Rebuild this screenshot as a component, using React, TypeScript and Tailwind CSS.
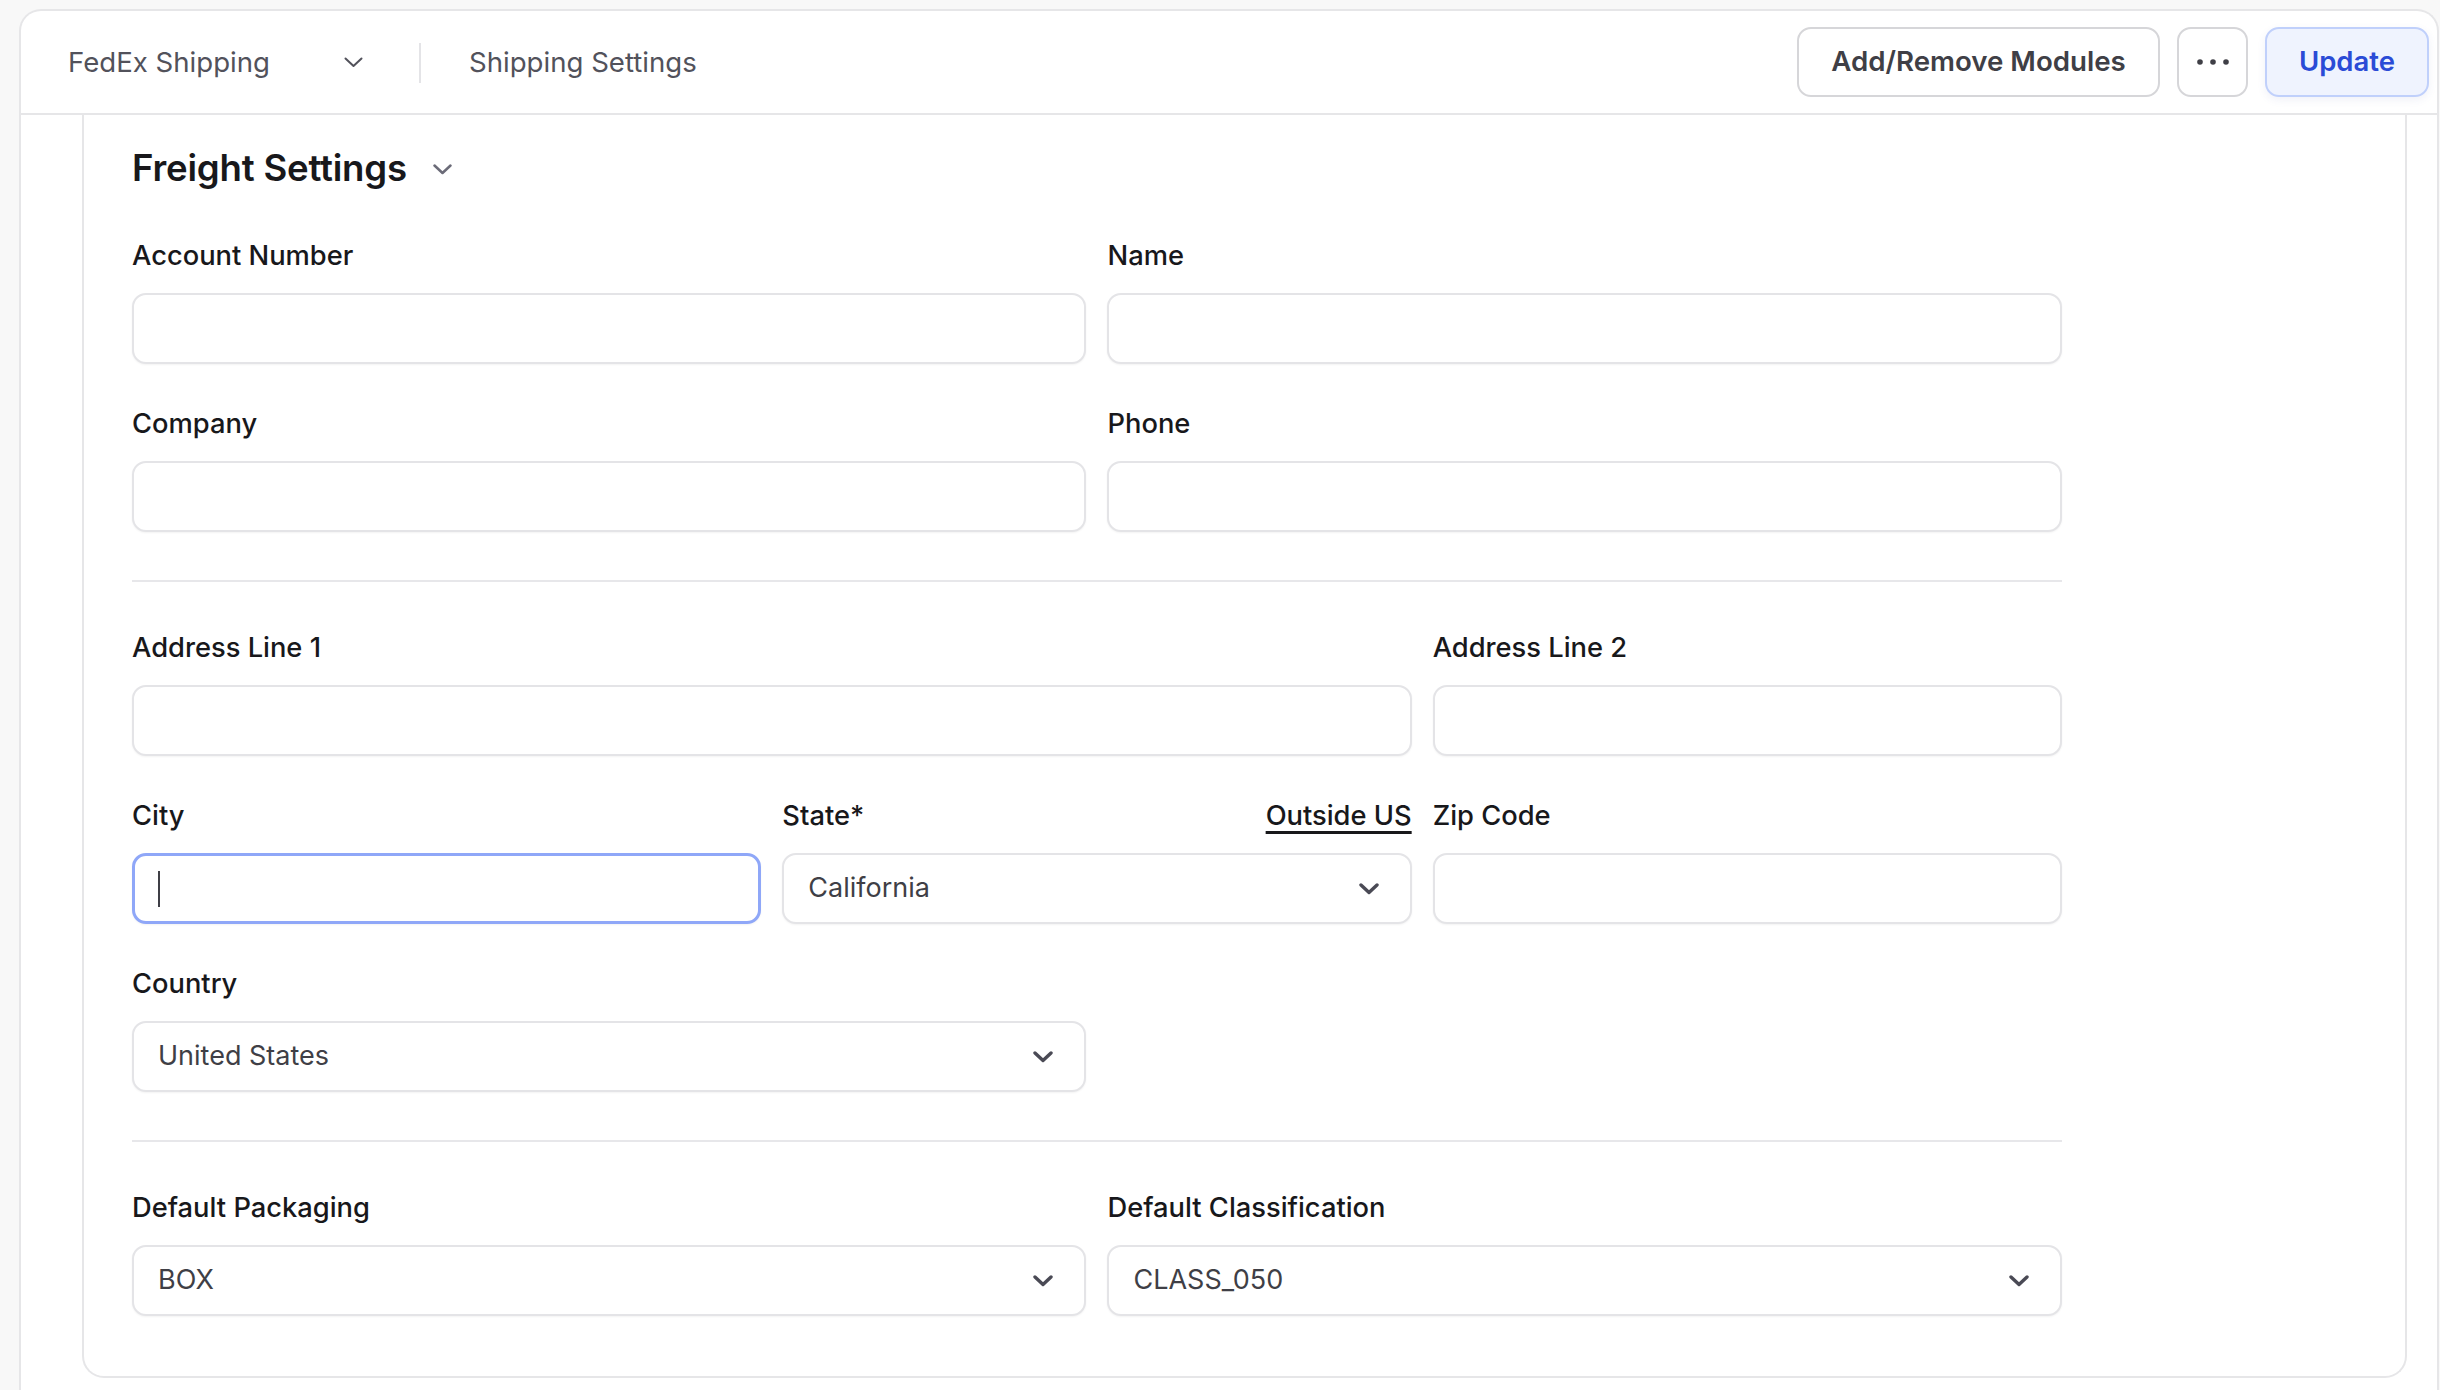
import React from "react";

const font = { fontFamily: "Inter, 'Noto Sans', sans-serif" };

function ChevronThin({ className = "", strokeWidth = 2 }: { className?: string; strokeWidth?: number }) {
  return (
    <svg className={className} width="19" height="11" viewBox="0 0 19 11" fill="none">
      <path d="M1.5 1.5 L9.5 9 L17.5 1.5" stroke="currentColor" strokeWidth={strokeWidth} strokeLinecap="round" strokeLinejoin="round" />
    </svg>
  );
}

function ChevronBold({ className = "" }: { className?: string }) {
  return (
    <svg className={className} width="20" height="12" viewBox="0 0 20 12" fill="none">
      <path d="M2 2 L10 9.5 L18 2" stroke="currentColor" strokeWidth="3.4" strokeLinecap="round" strokeLinejoin="round" />
    </svg>
  );
}

function Dots() {
  return (
    <svg width="32" height="8" viewBox="0 0 32 8" fill="#3f3f46">
      <circle cx="3" cy="4" r="2.8" />
      <circle cx="16" cy="4" r="2.8" />
      <circle cx="29" cy="4" r="2.8" />
    </svg>
  );
}

function Label({ children, extra }: { children: React.ReactNode; extra?: React.ReactNode }) {
  return (
    <div className="mb-[21px] flex h-[32px] items-center justify-between text-[27.3px] font-medium leading-[32px] text-[#18181b]">
      <span>{children}</span>
      {extra}
    </div>
  );
}

function TextInput() {
  return <div className="h-[71px] rounded-[14px] border-2 border-[#e4e4e7] bg-white shadow-[0_1px_2px_rgba(0,0,0,0.05)]" />;
}

function FocusedInput() {
  return (
    <div className="flex h-[71px] items-center rounded-[14px] border-[3px] border-[#8fa7f8] bg-white pl-[23px] shadow-[0_1px_2px_rgba(0,0,0,0.05)]">
      <span className="block h-[36px] w-[2px] bg-[#3f3f46]" />
    </div>
  );
}

function SelectBox({ value }: { value: string }) {
  return (
    <div className="flex h-[71px] items-center justify-between rounded-[14px] border-2 border-[#e4e4e7] bg-white pl-[24px] pr-[31px] text-[27px] text-[#3f3f46] shadow-[0_1px_2px_rgba(0,0,0,0.05)]">
      <span>{value}</span>
      <ChevronBold className="text-[#4a4a55]" />
    </div>
  );
}

function Field({
  label,
  span,
  children,
  extra,
}: {
  label: string;
  span: string;
  children: React.ReactNode;
  extra?: React.ReactNode;
}) {
  return (
    <div className={span}>
      <Label extra={extra}>{label}</Label>
      {children}
    </div>
  );
}

function Divider() {
  return <div className="col-span-6 mb-[6px] mt-[4px] h-[2px] bg-[#e7e7ea]" />;
}

export default function App() {
  return (
    <div style={font} className="h-[1390px] w-[2440px] overflow-hidden bg-[#f8f8f8] pl-[19px] pr-[1px] pt-[9px]">
      <div className="h-full rounded-t-[22px] border-x-2 border-t-2 border-[#e6e6e8] bg-white">
        {/* top bar */}
        <div className="flex h-[104px] items-center justify-between border-b-2 border-[#e6e6e8] pl-[47px] pr-[8px]">
          <div className="flex items-center pt-[2px] text-[27.6px] text-[#52525b]">
            <div className="flex w-[295px] items-center justify-between">
              <span>FedEx Shipping</span>
              <ChevronThin className="text-[#52525b]" />
            </div>
            <div className="ml-[56px] mr-[48px] h-[40px] w-[2px] bg-[#e4e4e7]" />
            <span>Shipping Settings</span>
          </div>
          <div className="flex items-center gap-[17px]">
            <button className="flex h-[70px] w-[363px] items-center justify-center rounded-[14px] border-2 border-[#d6d6d9] bg-white text-[27.7px] font-semibold text-[#3f3f46]">
              Add/Remove Modules
            </button>
            <button className="flex h-[70px] w-[71px] items-center justify-center rounded-[14px] border-2 border-[#d6d6d9] bg-white">
              <Dots />
            </button>
            <button className="flex h-[70px] w-[164px] items-center justify-center rounded-[14px] border-2 border-[#c0d0fb] bg-[#eff3fe] text-[27.5px] font-semibold text-[#2a4bd6] shadow-[0_3px_8px_rgba(60,80,160,0.08)]">
              Update
            </button>
          </div>
        </div>

        {/* freight section */}
        <div className="ml-[61px] mr-[30px] rounded-b-[22px] border-x-2 border-b-2 border-[#e6e6e8] bg-white pb-[60px] pl-[48px] pt-[33px]">
          <div className="flex h-[40px] items-center gap-[26px]">
            <h2 className="text-[36.6px] font-semibold leading-[40px] tracking-[-0.2px] text-[#18181b]">Freight Settings</h2>
            <ChevronThin className="mt-[2px] text-[#6b6b78]" strokeWidth={2.5} />
          </div>

          <div className="mt-[52px] grid w-[1930px] grid-cols-6 gap-x-[21px] gap-y-[44px]">
            <Field label="Account Number" span="col-span-3">
              <TextInput />
            </Field>
            <Field label="Name" span="col-span-3">
              <TextInput />
            </Field>
            <Field label="Company" span="col-span-3">
              <TextInput />
            </Field>
            <Field label="Phone" span="col-span-3">
              <TextInput />
            </Field>

            <Divider />

            <Field label="Address Line 1" span="col-span-4">
              <TextInput />
            </Field>
            <Field label="Address Line 2" span="col-span-2">
              <TextInput />
            </Field>
            <Field label="City" span="col-span-2">
              <FocusedInput />
            </Field>
            <Field
              label="State*"
              span="col-span-2"
              extra={
                <a className="cursor-pointer underline decoration-[3px] underline-offset-[6px]">Outside US</a>
              }
            >
              <SelectBox value="California" />
            </Field>
            <Field label="Zip Code" span="col-span-2">
              <TextInput />
            </Field>
            <Field label="Country" span="col-span-3">
              <SelectBox value="United States" />
            </Field>
            <div className="col-span-3" />

            <Divider />

            <Field label="Default Packaging" span="col-span-3">
              <SelectBox value="BOX" />
            </Field>
            <Field label="Default Classification" span="col-span-3">
              <SelectBox value="CLASS_050" />
            </Field>
          </div>
        </div>
      </div>
    </div>
  );
}
